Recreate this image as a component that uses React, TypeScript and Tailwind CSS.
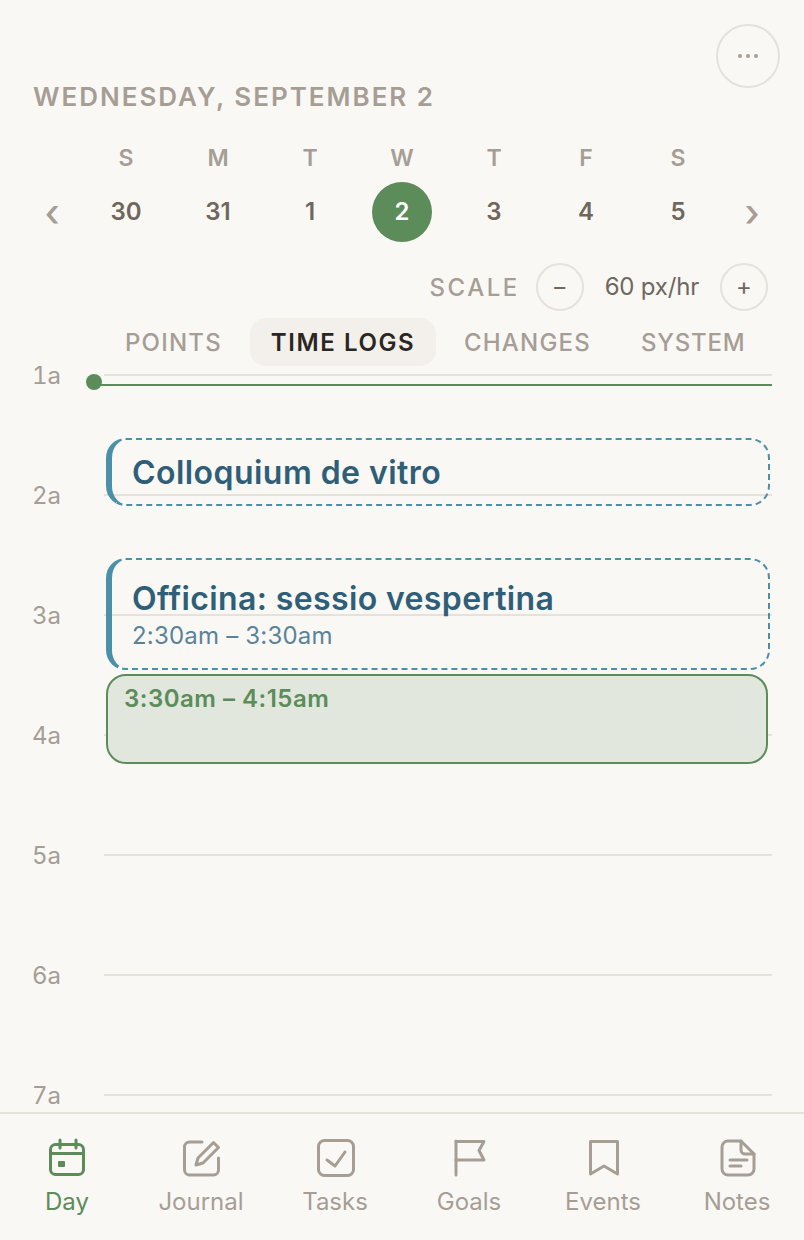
import React from 'react';

const days = [
  { letter: 'S', num: '30' },
  { letter: 'M', num: '31' },
  { letter: 'T', num: '1' },
  { letter: 'W', num: '2', active: true },
  { letter: 'T', num: '3' },
  { letter: 'F', num: '4' },
  { letter: 'S', num: '5' },
];

const hours = ['1a', '2a', '3a', '4a', '5a', '6a', '7a'];

const CalendarIcon = () => (
  <svg width="40" height="40" viewBox="0 0 40 40" fill="none" stroke="currentColor" strokeWidth="3" strokeLinecap="round" strokeLinejoin="round">
    <rect x="3.5" y="6.5" width="33" height="30" rx="5" />
    <path d="M13 2v8M29 2v8M3.5 15.5h33" />
    <rect x="11" y="23" width="7" height="6" rx="1" fill="currentColor" stroke="none" />
  </svg>
);

const JournalIcon = () => (
  <svg width="40" height="40" viewBox="0 0 40 40" fill="none" stroke="currentColor" strokeWidth="3" strokeLinecap="round" strokeLinejoin="round">
    <path d="M21 4H8.500a5 5 0 0 0-5 5v23a5 5 0 0 0 5 5h24a5 5 0 0 0 5-5V20" />
    <path d="M15 27l2-7L32.500 4.500l5 5L22 25z" />
  </svg>
);

const TasksIcon = () => (
  <svg width="40" height="40" viewBox="0 0 40 40" fill="none" stroke="currentColor" strokeWidth="3" strokeLinecap="round" strokeLinejoin="round">
    <rect x="3.500" y="2.500" width="35" height="35" rx="6" />
    <path d="M12 22l8 6 10-14" />
  </svg>
);

const GoalsIcon = () => (
  <svg width="40" height="40" viewBox="0 0 40 40" fill="none" stroke="currentColor" strokeWidth="3" strokeLinecap="round" strokeLinejoin="round">
    <path d="M7 3v34" />
    <path d="M7 3.500h28l-5 9 5 9.500H7" />
  </svg>
);

const EventsIcon = () => (
  <svg width="40" height="40" viewBox="0 0 40 40" fill="none" stroke="currentColor" strokeWidth="3" strokeLinecap="round" strokeLinejoin="round">
    <path d="M7.500 3.500h27V36L21 28 7.500 36z" />
  </svg>
);

const NotesIcon = () => (
  <svg width="40" height="40" viewBox="0 0 40 40" fill="none" stroke="currentColor" strokeWidth="3" strokeLinecap="round" strokeLinejoin="round">
    <path d="M24 3H11a6 6 0 0 0-6 6v22a6 6 0 0 0 6 6h20a6 6 0 0 0 6-6V16z" />
    <path d="M24 3v9a4 4 0 0 0 4 4h9" />
    <path d="M13 22h17M13 28h11" />
  </svg>
);

const navItems = [
  { label: 'Day', icon: <CalendarIcon />, active: true },
  { label: 'Journal', icon: <JournalIcon /> },
  { label: 'Tasks', icon: <TasksIcon /> },
  { label: 'Goals', icon: <GoalsIcon /> },
  { label: 'Events', icon: <EventsIcon /> },
  { label: 'Notes', icon: <NotesIcon /> },
];

const tabs = [
  { label: 'POINTS', className: 'ml-[109px] w-[128px] pl-4 font-medium tracking-[1.2px]' },
  { label: 'TIME LOGS', className: 'ml-[13px] w-[186px] justify-center bg-[#f3f0eb] text-[#2a2622] font-semibold tracking-[1.6px]' },
  { label: 'CHANGES', className: 'ml-[6px] px-[22px] font-medium tracking-[1.2px]' },
  { label: 'SYSTEM', className: 'ml-[6px] px-[22px] font-medium tracking-[0.8px]' },
];

export default function App() {
  return (
    <div className="flex h-screen w-full flex-col overflow-hidden bg-[#faf8f5] font-['Inter',sans-serif] text-[#a69e95]">
      {/* Header */}
      <div className="flex justify-end pr-6 pt-6">
        <button className="flex h-16 w-16 items-center justify-center rounded-full border-2 border-[#e6e1da]">
          <svg width="24" height="6" viewBox="0 0 24 6" fill="#a69e95">
            <circle cx="4" cy="3" r="2" />
            <circle cx="12" cy="3" r="2" />
            <circle cx="20" cy="3" r="2" />
          </svg>
        </button>
      </div>
      <div className="-mt-[7px] pl-[33px] text-[26px] leading-8 font-semibold tracking-[1.98px]">WEDNESDAY, SEPTEMBER 2</div>

      {/* Week strip */}
      <div className="mt-[30px] flex px-6">
        <div className="flex w-14 items-end justify-center text-[38px] leading-[60px] font-medium">‹</div>
        <div className="grid flex-1 grid-cols-7">
          {days.map((d, i) => (
            <div key={i} className="flex flex-col items-center">
              <span className="h-[30px] text-[23px] leading-[30px] font-semibold">{d.letter}</span>
              <span
                className={`mt-[9px] flex h-[60px] w-[60px] items-center justify-center rounded-full text-[24px] font-semibold ${
                  d.active ? 'bg-[#5b8c5a] text-white' : 'text-[#6f675e]'
                }`}
              >
                {d.num}
              </span>
            </div>
          ))}
        </div>
        <div className="flex w-14 items-end justify-center text-[38px] leading-[60px] font-medium">›</div>
      </div>

      {/* Scale */}
      <div className="mt-[21px] flex items-center justify-end pr-9">
        <span className="pt-px text-[24px] font-medium tracking-[2.5px]">SCALE</span>
        <button className="ml-4 flex h-12 w-12 items-center justify-center rounded-full border-2 border-[#e6e1da] text-[24px] text-[#6f675e]">−</button>
        <span className="ml-[21px] text-[24px] tracking-[-0.2px] text-[#6f675e]">60 px/hr</span>
        <button className="ml-[21px] flex h-12 w-12 items-center justify-center rounded-full border-2 border-[#e6e1da] text-[24px] text-[#6f675e]">+</button>
      </div>

      {/* Tabs */}
      <div className="relative z-10 mt-[7px] flex">
        {tabs.map((t) => (
          <div key={t.label} className={`flex h-12 items-center rounded-2xl pt-px text-[24px] ${t.className}`}>
            {t.label}
          </div>
        ))}
      </div>

      {/* Timeline */}
      <div className="relative -mt-4 min-h-0 flex-1 overflow-hidden">
        <div className="pt-6">
          {hours.map((h) => (
            <div key={h} className="flex h-[120px] items-start">
              <span className="-mt-[14px] w-[104px] pl-8 text-[24px] leading-8 tabular-nums">{h}</span>
              <div className="mr-8 h-0.5 flex-1 bg-[#e6e1da]" />
            </div>
          ))}
        </div>

        {/* Now line */}
        <div className="absolute left-[94px] right-8 top-[34px] h-0.5 bg-[#5b8c5a]" />
        <div className="absolute left-[86px] top-6 h-4 w-4 rounded-full bg-[#5b8c5a]" />

        {/* Events */}
        <div className="absolute left-[106px] top-[88px] h-[68px] w-[664px] rounded-[20px] border-2 border-l-[6px] border-dashed border-[#4a90a8] pl-5 pt-3 [border-left-style:solid]">
          <div className="text-[32px] leading-[42px] font-semibold tracking-[0.45px] text-[#2f5f78]">Colloquium de vitro</div>
        </div>
        <div className="absolute left-[106px] top-[208px] h-[112px] w-[664px] rounded-[20px] border-2 border-l-[6px] border-dashed border-[#4a90a8] pl-5 pt-[18px] [border-left-style:solid]">
          <div className="text-[32px] leading-[42px] font-semibold tracking-[0.38px] text-[#2f5f78]">Officina: sessio vespertina</div>
          <div className="text-[24px] leading-8 tracking-[0.2px] text-[#5a8399]">2:30am – 3:30am</div>
        </div>
        <div className="absolute left-[106px] top-[324px] h-[90px] w-[662px] rounded-[20px] border-2 border-[#5b8c5a] bg-[#e1e7dd] pl-4 pt-[7px] text-[24px] leading-8 font-semibold tracking-[0.5px] text-[#5b8c5a]">
          3:30am – 4:15am
        </div>
      </div>

      {/* Bottom nav */}
      <nav className="grid h-[128px] grid-cols-6 border-t-2 border-[#e6e1da]">
        {navItems.map((item) => (
          <div key={item.label} className={`flex flex-col items-center pt-6 ${item.active ? 'text-[#5b8c5a]' : ''}`}>
            {item.icon}
            <span className="mt-[8px] text-[24px] leading-8">{item.label}</span>
          </div>
        ))}
      </nav>
    </div>
  );
}
